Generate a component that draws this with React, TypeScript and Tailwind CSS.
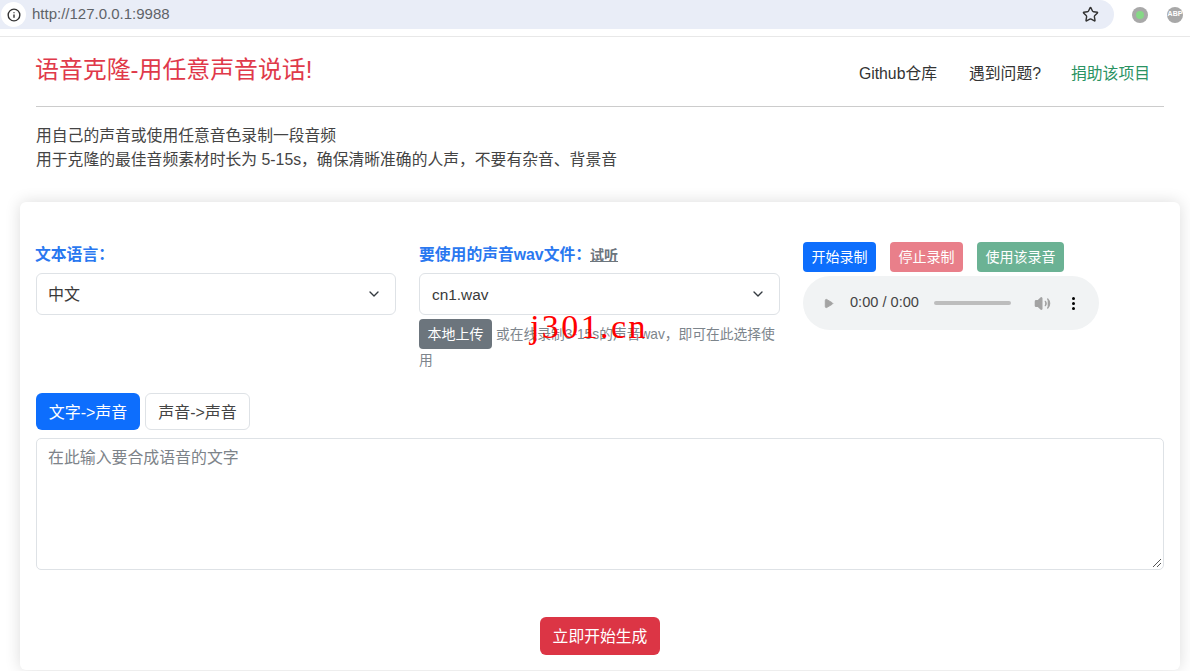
import React from "react";
import { Star, ChevronDown, Info, Play, Volume2 } from "lucide-react";

const font = { fontFamily: '"Liberation Sans", "Noto Sans CJK SC", sans-serif' };

function Select({ value, cjk }: { value: string; cjk?: boolean }) {
  return (
    <div className="flex h-[42px] items-center justify-between rounded-[6px] border border-[#dee2e6] bg-white pr-[13px] text-[#3a3a3a]">
      <span className={cjk ? "pl-[11px] pt-[1px] text-[16px]" : "pl-3 pt-[1px] text-[15.4px]"}>{value}</span>
      <ChevronDown size={16} strokeWidth={2} className="text-[#343a40]" />
    </div>
  );
}

function Small({ children, cls }: { children: React.ReactNode; cls: string }) {
  return <span className={`flex h-[30px] items-center rounded-[4px] px-[8.5px] pt-[1px] text-[14px] text-white ${cls}`}>{children}</span>;
}

export default function App() {
  return (
    <div className="relative h-[671px] w-[1190px] overflow-hidden bg-white" style={font}>
      <div className="flex h-[37px] border-b border-[#e8e8e8]">
        <div className="flex h-[29px] w-[1114px] items-center rounded-r-[15px] bg-[#e9edf7]">
          <div className="ml-[1px] flex h-[25px] w-[25px] items-center justify-center rounded-full bg-white">
            <Info size={14} strokeWidth={2.4} className="text-[#333]" />
          </div>
          <span className="ml-[6px] text-[15px] text-[#5f6368]">http://127.0.0.1:9988</span>
          <Star size={17} strokeWidth={2} className="ml-auto mr-[15px] text-[#333]" />
        </div>
        <div className="flex h-[29px] flex-1 items-center">
          <div className="ml-[18px] flex h-[16px] w-[16px] items-center justify-center rounded-full bg-[#a8a8a8]">
            <div className="h-[8px] w-[8px] rounded-full bg-[#86d886]" />
          </div>
          <div className="ml-[19px] flex h-[16px] w-[16px] items-center justify-center rounded-full bg-[#a8a8a8] text-[7px] font-bold text-white">ABP</div>
        </div>
      </div>

      <div className="mx-[36px] mt-[16px] flex h-[54px] w-[1128px] border-b border-[#cccccc]">
        <h1 className="ml-[-1px] text-[23.9px] leading-[34px] text-[#e0394a]">语音克隆-用任意声音说话!</h1>
        <nav className="ml-auto flex pr-[14px] pt-[10px] text-[15.8px] leading-[22px] text-[#333]">
          <span>Github仓库</span>
          <span className="ml-[32px]">遇到问题?</span>
          <span className="ml-[30px] text-[#2a9363]">捐助该项目</span>
        </nav>
      </div>

      <div className="mx-[36px] mt-[17px] text-[15.8px] leading-[24px] text-[#444]">
        <p>用自己的声音或使用任意音色录制一段音频</p>
        <p>用于克隆的最佳音频素材时长为 5-15s，确保清晰准确的人声，不要有杂音、背景音</p>
      </div>

      <div className="ml-[20px] mr-[10px] mt-[30px] h-[468px] rounded-[6px] bg-white px-[16px] pt-[40px] shadow-[0_0_16px_rgba(0,0,0,0.14)]">
        <div className="flex h-[132px]">
          <div className="w-[360px]">
            <div className="ml-[-1px] flex h-[31px] items-start pt-[3px] text-[15.8px] font-bold leading-[20px] text-[#2a78f0]">文本语言：</div>
            <Select value="中文" cjk />
          </div>
          <div className="ml-[23px] w-[361px]">
            <div className="flex h-[31px] items-start pt-[3px] text-[15.8px] font-bold leading-[20px] text-[#2a78f0]">
              要使用的声音wav文件：
              <span className="ml-[-1px] text-[14px] text-[#6c757d] underline">试听</span>
            </div>
            <Select value="cn1.wav" />
            <div className="mt-[4px] text-[13.75px] leading-[24px] text-[#7d858c]">
              <span className="mr-[4px] inline-block h-[30px] w-[73px] rounded-[4px] bg-[#6c757d] text-center text-[14px] leading-[30px] text-white">本地上传</span>
              或在线录制3-15s的声音wav，即可在此选择使用
            </div>
          </div>
          <div className="ml-[23px]">
            <div className="flex gap-[14px]">
              <Small cls="bg-[#0d6efd]">开始录制</Small>
              <Small cls="bg-[#e97f8a]">停止录制</Small>
              <Small cls="bg-[#6bb294]">使用该录音</Small>
            </div>
            <div className="mt-[4px] flex h-[54px] w-[296px] items-center rounded-[27px] bg-[#f1f3f4] pl-[20px] text-[14.6px] text-[#444]">
              <Play size={11} fill="#a3a3a3" stroke="#a3a3a3" />
              <span className="ml-[16px]">0:00 / 0:00</span>
              <div className="ml-[15px] h-[4px] w-[77px] rounded-full bg-[#bdbdbd]" />
              <Volume2 size={17} fill="#a3a3a3" className="ml-[23px] text-[#a3a3a3]" />
              <div className="ml-[21px] flex flex-col gap-[2px]">
                <i className="h-[3px] w-[3px] rounded-full bg-black" />
                <i className="h-[3px] w-[3px] rounded-full bg-black" />
                <i className="h-[3px] w-[3px] rounded-full bg-black" />
              </div>
            </div>
          </div>
        </div>

        <div className="mt-[19px] flex gap-[5px] text-[16px]">
          <span className="flex h-[37px] w-[104px] items-center justify-center rounded-[6px] bg-[#0d6efd] pt-[2px] text-white">文字-&gt;声音</span>
          <span className="flex h-[37px] w-[105px] items-center justify-center rounded-[6px] border border-[#dee2e6] pt-[2px] text-[#444]">声音-&gt;声音</span>
        </div>

        <div className="relative mt-[8px] h-[132px] w-[1128px] rounded-[5px] border border-[#dee2e6] pl-[11px] pt-[7px] text-[15.9px] leading-[24px] text-[#7d8389]">
          在此输入要合成语音的文字
          <svg className="absolute bottom-[1px] right-[1px]" width="11" height="11" viewBox="0 0 11 11" stroke="#555" strokeWidth="1">
            <path d="M2 10 L10 2 M6 10 L10 6" />
          </svg>
        </div>

        <div className="mt-[47px] flex justify-center">
          <span className="flex h-[38px] w-[120px] items-center justify-center rounded-[6px] bg-[#dc3545] pt-[2px] text-[15.8px] text-white">立即开始生成</span>
        </div>
      </div>

      <span className="absolute left-[530px] top-[307px] text-[34px] leading-[40px] tracking-[2.4px] text-[#ff0000]" style={{ fontFamily: '"Liberation Serif", serif' }}>j301.cn</span>
    </div>
  );
}
